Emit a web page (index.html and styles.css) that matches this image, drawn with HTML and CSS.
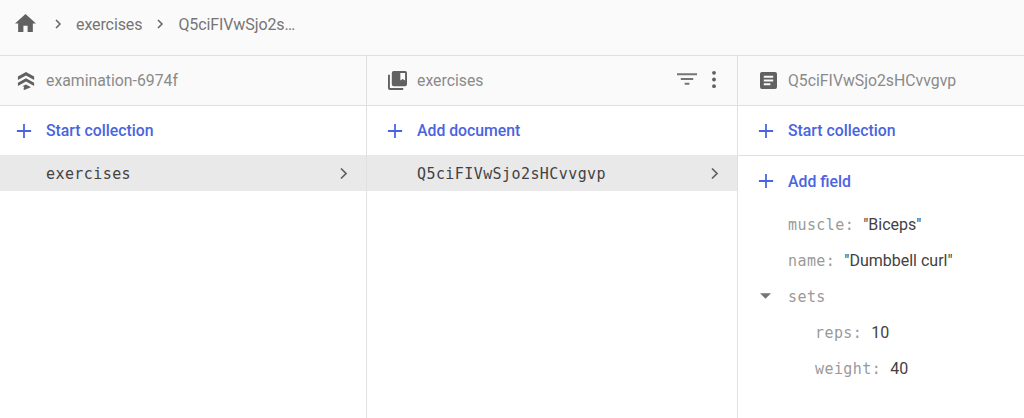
FILE: index.html
```html
<!DOCTYPE html>
<html lang="en">
<head>
<meta charset="utf-8">
<title>Firestore</title>
<link rel="stylesheet" href="styles.css">
</head>
<body>
<nav class="crumbs">
  <svg class="home" viewBox="2 3 20 17"><path d="M10 20v-6h4v6h5v-8h3L12 3 2 12h3v8z"/></svg>
  <svg class="crumb-chev" viewBox="0 0 24 24"><path d="M9 6l6 6-6 6"/></svg>
  <span class="crumb">exercises</span>
  <svg class="crumb-chev" viewBox="0 0 24 24"><path d="M9 6l6 6-6 6"/></svg>
  <span class="crumb">Q5ciFIVwSjo2s…</span>
</nav>
<main class="panels">
  <section class="panel panel-root">
    <header class="panel-head">
      <svg class="head-icon head-icon-fire" viewBox="0 0 20 20"><path d="M10 0l9 5v4l-9-5-9 5V5z"/><path d="M10 7l9 5v3.500l-9-5-9 5V12z"/><path d="M10 14l5.500 3L8 20l-.8-.8.8-2.700-2-.8z"/></svg>
      <span class="head-title">examination-6974f</span>
    </header>
    <div class="action action-tall">
      <svg class="plus" viewBox="0 0 18 18"><path d="M9 1v16M1 9h16"/></svg>
      <span>Start collection</span>
    </div>
    <div class="row">
      <span class="mono">exercises</span>
      <svg class="row-chev" viewBox="0 0 24 24"><path d="M8 4l8 8-8 8"/></svg>
    </div>
  </section>
  <section class="panel panel-mid">
    <header class="panel-head">
      <svg class="head-icon" viewBox="2 2 20 20"><path d="M4 6H2v14a2 2 0 0 0 2 2h14v-2H4z"/><path d="M20 2H8a2 2 0 0 0-2 2v12a2 2 0 0 0 2 2h12a2 2 0 0 0 2-2V4a2 2 0 0 0-2-2zm0 10l-2.500-1.500L15 12V4h5z"/></svg>
      <span class="head-title">exercises</span>
      <span class="head-tools">
        <svg class="filter" viewBox="0 0 22 14"><path d="M0 1h21v2H0zM4 6h13v2H4zM8 11h5v2H8z"/></svg>
        <svg class="dots" viewBox="0 0 6 20"><circle cx="3" cy="3" r="2"/><circle cx="3" cy="10" r="2"/><circle cx="3" cy="17" r="2"/></svg>
      </span>
    </header>
    <div class="action action-tall">
      <svg class="plus" viewBox="0 0 18 18"><path d="M9 1v16M1 9h16"/></svg>
      <span>Add document</span>
    </div>
    <div class="row">
      <span class="mono">Q5ciFIVwSjo2sHCvvgvp</span>
      <svg class="row-chev" viewBox="0 0 24 24"><path d="M8 4l8 8-8 8"/></svg>
    </div>
  </section>
  <section class="panel panel-doc">
    <header class="panel-head">
      <svg class="head-icon" viewBox="3 3 18 18"><path d="M19 3H5a2 2 0 0 0-2 2v14a2 2 0 0 0 2 2h14a2 2 0 0 0 2-2V5a2 2 0 0 0-2-2zm-5 14H7v-2h7zm3-4H7v-2h10zm0-4H7V7h10z"/></svg>
      <span class="head-title">Q5ciFIVwSjo2sHCvvgvp</span>
    </header>
    <div class="action action-doc action-ruled">
      <svg class="plus" viewBox="0 0 18 18"><path d="M9 1v16M1 9h16"/></svg>
      <span>Start collection</span>
    </div>
    <div class="action action-doc">
      <svg class="plus" viewBox="0 0 18 18"><path d="M9 1v16M1 9h16"/></svg>
      <span>Add field</span>
    </div>
    <ul class="fields">
      <li class="field"><span class="key">muscle:</span><span class="val">"Biceps"</span></li>
      <li class="field"><span class="key">name:</span><span class="val">"Dumbbell curl"</span></li>
      <li class="field field-map"><svg class="caret" viewBox="0 0 10 5"><path d="M0 0h10L5 5z"/></svg><span class="key">sets</span></li>
      <li class="field field-sub"><span class="key">reps:</span><span class="val">10</span></li>
      <li class="field field-sub"><span class="key">weight:</span><span class="val">40</span></li>
    </ul>
  </section>
</main>
</body>
</html>
```
FILE: styles.css
```css
* { box-sizing: border-box; }
html, body { margin: 0; height: 100%; }
body {
  font-family: Roboto, "Liberation Sans", sans-serif;
  font-size: 14px;
  background: #fff;
  color: #424242;
  display: flex;
  flex-direction: column;
  overflow: hidden;
}
svg { display: block; flex: none; }

.crumbs {
  height: 56px;
  flex: none;
  display: flex;
  align-items: center;
  padding: 0 0 7px 15px;
  background: #fafafa;
  border-bottom: 1px solid #e0e0e0;
  color: #757575;
  font-size: 16px;
}
.home { width: 21px; height: 18px; fill: #616161; margin-right: 14px; margin-bottom: 2px; }
.crumb-chev { width: 16px; height: 16px; fill: none; stroke: #616161; stroke-width: 2.200; margin-right: 10px; }
.crumb { margin-right: 10px; letter-spacing: -0.1px; }

.panels { flex: 1; display: flex; min-height: 0; }
.panel { display: flex; flex-direction: column; border-right: 1px solid #e0e0e0; }
.panel-root { width: 367px; }
.panel-mid { width: 371px; }
.panel-doc { flex: 1; border-right: 0; }

.panel-head {
  height: 50px;
  flex: none;
  display: flex;
  align-items: center;
  padding: 0 20px 0 21px;
  background: #fafafa;
  border-bottom: 1px solid #e0e0e0;
  font-size: 15.800px;
  color: #8a8a8a;
}
.panel-root .panel-head { padding-left: 17px; }
.panel-doc .panel-head { padding-left: 22px; }
.head-icon { width: 19px; height: 19px; fill: #616161; margin-right: 10px; }
.panel-doc .head-icon { width: 17px; height: 17px; margin-right: 11px; }
.head-icon-fire { width: 18px; height: 18px; margin-right: 11px; }
.head-title { flex: 1; }
.head-tools { display: flex; align-items: center; gap: 10px; margin-bottom: 3px; }
.filter { width: 21px; height: 14px; fill: #757575; margin-right: 3px; }
.dots { width: 6px; height: 19px; fill: #616161; }

.action {
  display: flex;
  align-items: center;
  color: #4a63e0;
  font-weight: 500;
  font-size: 15.800px;
  padding-left: 16px;
  gap: 14px;
}
.panel-mid .action { padding-left: 20px; }
.panel-doc .action { padding-left: 20px; }
.action-tall { height: 49px; flex: none; }
.action-doc { height: 50px; flex: none; }
.action-ruled { border-bottom: 1px solid #e0e0e0; }
.plus { width: 16px; height: 16px; fill: none; stroke: #4a63e0; stroke-width: 2; }

.row {
  height: 36px;
  flex: none;
  display: flex;
  align-items: center;
  justify-content: space-between;
  padding: 0 15px 0 46px;
  background: #e9e9e9;
}
.panel-mid .row { padding-left: 50px; }
.mono { font-family: "DejaVu Sans Mono", "Liberation Mono", monospace; font-size: 15px; letter-spacing: 0.42px; color: #424242; padding-top: 2px; }
.row-chev { width: 15px; height: 15px; fill: none; stroke: #616161; stroke-width: 2.800; }

.fields { list-style: none; margin: 0; padding: 0 0 0 50px; }
.field { height: 36px; display: flex; align-items: center; position: relative; }
.field-sub { padding-left: 27px; }
.key { font-family: "DejaVu Sans Mono", "Liberation Mono", monospace; font-size: 15px; letter-spacing: 0.42px; color: #9a9a9a; margin-right: 9px; padding-top: 2px; }
.val { font-size: 16px; color: #424242; }
.caret { position: absolute; left: -28px; top: 15px; width: 11px; height: 6px; fill: #757575; }
```
